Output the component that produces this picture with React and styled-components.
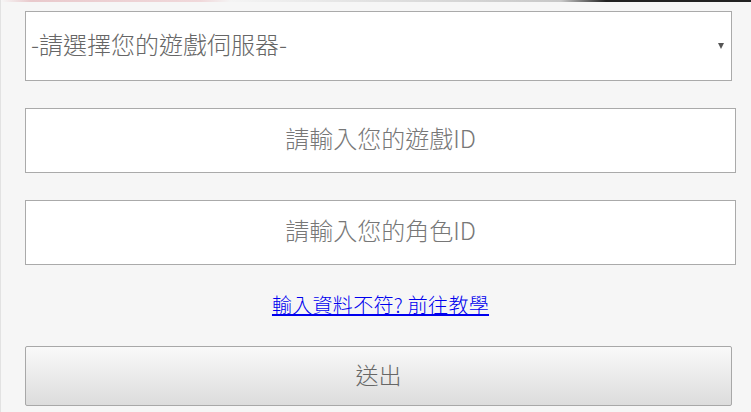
import styled, { createGlobalStyle } from 'styled-components'

const GlobalStyle = createGlobalStyle`
  html, body {
    margin: 0;
    padding: 0;
    background: #f6f6f6;
  }
  body {
    font-family: "Liberation Sans", "Noto Sans CJK TC", sans-serif;
  }
`

const Page = styled.div`
  position: relative;
  width: 751px;
  height: 412px;
  overflow: hidden;
  box-sizing: border-box;
  border-left: 1px solid #e2e2e2;
  background: #f6f6f6;
`

// leftover edge of the banner image above the form
const TopStrip = styled.div`
  height: 2px;
  background: linear-gradient(90deg, #f6f6f6 0px, #e9c9cc 30px, #f0d8da 200px, #f4f4f4 230px, #c8c8c8 560px, #222 605px, #222 751px);
`

const Form = styled.div`
  display: flex;
  flex-direction: column;
  align-items: flex-start;
  width: 711px;
  padding: 9px 0 0 24px;
`

const SelectBox = styled.div`
  position: relative;
  box-sizing: border-box;
  width: 707px;
  height: 70px;
  border: 1px solid #aaa;
  background: #fff;
  display: flex;
  align-items: center;
  padding: 0 0 6px 5px;
  font-size: 24px;
  color: #666;
  font-family: "Noto Sans CJK TC", sans-serif;
  font-weight: 300;
`

const Arrow = styled.span`
  position: absolute;
  right: 7px;
  top: 31px;
  width: 0;
  height: 0;
  border-left: 3px solid transparent;
  border-right: 3px solid transparent;
  border-top: 6px solid #555;
`

const TextField = styled.div`
  box-sizing: border-box;
  width: 711px;
  height: 65px;
  margin-top: ${props => props.$gap}px;
  padding-bottom: 6px;
  border: 1px solid #aaa;
  background: #fff;
  display: flex;
  align-items: center;
  justify-content: center;
  font-size: 24px;
  color: #777;
  font-family: "Noto Sans CJK TC", sans-serif;
  font-weight: 300;
`

const HelpLink = styled.a`
  align-self: center;
  margin: 26px 0 0 0;
  height: 28px;
  line-height: 28px;
  font-size: 20px;
  letter-spacing: 0.3px;
  color: #0000ee;
  text-decoration: underline;
  font-family: "Noto Sans CJK TC", sans-serif;
  font-weight: 300;
`

const SubmitButton = styled.button`
  box-sizing: border-box;
  width: 707px;
  height: 60px;
  margin-top: 27px;
  padding: 0 0 5px;
  border: 1px solid #a8a8a8;
  border-radius: 2px;
  background: linear-gradient(#f9f9f9, #dcdcdc);
  font-size: 23px;
  color: #666;
  font-family: "Noto Sans CJK TC", sans-serif;
  font-weight: 300;
  cursor: pointer;
`

function App() {
  return (
    <Page>
      <GlobalStyle />
      <TopStrip />
      <Form>
        <SelectBox>
          -請選擇您的遊戲伺服器-
          <Arrow />
        </SelectBox>
        <TextField $gap={27}>請輸入您的遊戲ID</TextField>
        <TextField $gap={27}>請輸入您的角色ID</TextField>
        <HelpLink href="#">輸入資料不符? 前往教學</HelpLink>
        <SubmitButton>送出</SubmitButton>
      </Form>
    </Page>
  )
}

export default App
